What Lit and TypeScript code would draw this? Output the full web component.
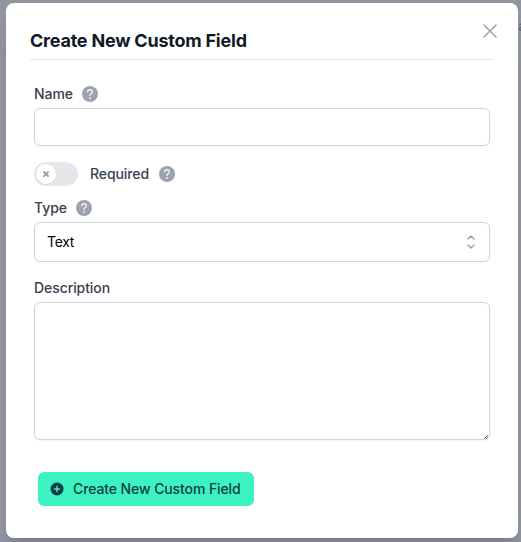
import { LitElement, html, css, svg } from "lit";
import { customElement, property } from "lit/decorators.js";

@customElement("help-icon")
export class HelpIcon extends LitElement {
  static styles = css`
    :host { display: block; width: 16px; height: 16px; }
    svg { display: block; }
  `;
  render() {
    return html`<svg width="16" height="16" viewBox="0 0 16 16" fill="none">
      <circle cx="8" cy="8" r="8" fill="#9ca3af" />
      <path d="M5.600 5.900C5.700 4.500 6.600 3.700 8 3.700c1.400 0 2.400.8 2.400 2 0 .9-.5 1.400-1.200 1.900C8.400 8.100 8 8.500 8 9.400" stroke="#f3f4f6" stroke-width="1.350" stroke-linecap="round" />
      <circle cx="8" cy="11.900" r=".95" fill="#f3f4f6" />
    </svg>`;
  }
}

@customElement("field-label")
export class FieldLabel extends LitElement {
  @property() text = "";
  @property({ type: Boolean }) help = false;
  static styles = css`
    :host { display: flex; align-items: center; gap: 9.6px; height: 20px; }
    .text { font: 500 14px/20px Inter, sans-serif; color: #374151; letter-spacing: -.08px; }
  `;
  render() {
    return html`<span class="text">${this.text}</span>${this.help ? html`<help-icon></help-icon>` : null}`;
  }
}

@customElement("app-root")
export class AppRoot extends LitElement {
  static styles = css`
    * { box-sizing: border-box; }
    :host {
      display: block; position: relative; height: 542px; overflow: hidden;
      padding: 3px 3px 4px 6px; background: #9195a0;
      font-family: Inter, sans-serif; box-sizing: border-box;
    }
    .behind { position: absolute; left: 518.5px; top: 16px; font-size: 14px; line-height: 20px; color: #5d626e; }
    .rule { position: absolute; left: 0; top: 52px; width: 6px; height: 1px; background: #8b8e99; }
    .modal {
      position: relative; height: 535px; padding: 24px; border-radius: 8px; background: #fff;
      box-shadow: 0 20px 25px -5px rgba(0, 0, 0, .1), 0 8px 10px -6px rgba(0, 0, 0, .1);
    }
    .close { position: absolute; right: 16px; top: 16px; width: 24px; height: 24px; padding: 0; border: 0; background: none; }
    svg { display: block; }
    h3 {
      margin: 0; height: 33px; border-bottom: 1px solid #e5e7eb;
      font-size: 18px; line-height: 28px; font-weight: 700; color: #111827; letter-spacing: -.22px;
    }
    form { padding: 24px 4px 0; display: flex; flex-direction: column; gap: 16px; }
    .field { display: flex; flex-direction: column; gap: 4px; }
    .box {
      display: block; width: 100%; border: 1px solid #d1d5db; border-radius: 6px; background: #fff;
      box-shadow: 0 1px 2px rgba(0, 0, 0, .05); outline: none; margin: 0;
      font: 400 14px/20px Inter, sans-serif; letter-spacing: -.3px; color: #000;
    }
    .input { height: 38px; padding: 8px 12px; }
    .select { height: 40px; padding: 0 8px 0 12px; display: flex; align-items: center; justify-content: space-between; }
    .area-wrap { position: relative; }
    .area { height: 138px; resize: none; }
    .grip { position: absolute; right: 1px; bottom: 1px; }
    .row { display: flex; align-items: center; gap: 12px; height: 24px; margin-bottom: -4px; }
    .toggle { width: 44px; height: 24px; padding: 2px; border-radius: 12px; background: #e5e7eb; }
    .knob { width: 20px; height: 20px; border-radius: 50%; background: #fff; display: grid; place-items: center; box-shadow: 0 1px 2px rgba(0, 0, 0, .08); }
    .submit {
      align-self: flex-start; margin: 16px 0 0 4px; width: 216px; height: 34px; padding: 0 12px;
      display: flex; align-items: center; gap: 9px; border: 0; border-radius: 6px;
      background: #3bf2c0; color: #0b3b47; font: 500 14px/20px Inter, sans-serif; letter-spacing: -.1px; white-space: nowrap;
    }
  `;

  private icon(size: number, box: number, body: unknown) {
    return html`<svg width=${size} height=${size} viewBox="0 0 ${box} ${box}" fill="none">${body}</svg>`;
  }

  render() {
    return html`
      <span class="rule"></span>
      <span class="behind">a</span>
      <div class="modal">
        <button class="close" aria-label="Close">
          ${this.icon(24, 24, svg`<path d="M6 18L18 6M6 6l12 12" stroke="#9ca3af" stroke-width="1.5" stroke-linecap="round" />`)}
        </button>
        <h3>Create New Custom Field</h3>
        <form>
          <div class="field">
            <field-label text="Name" help></field-label>
            <input class="box input" />
          </div>
          <div class="row">
            <div class="toggle" role="switch" aria-checked="false">
              <div class="knob">${this.icon(12, 12, svg`<path d="M4 8l2-2m0 0l2-2M6 6L4 4m2 2l2 2" stroke="#9ca3af" stroke-width="2" stroke-linecap="round" stroke-linejoin="round" />`)}</div>
            </div>
            <field-label text="Required" help></field-label>
          </div>
          <div class="field">
            <field-label text="Type" help></field-label>
            <div class="box select">
              <span>Text</span>
              ${this.icon(20, 20, svg`<path d="M7 7l3-3 3 3m0 6l-3 3-3-3" stroke="#9ca3af" stroke-width="1.5" stroke-linecap="round" stroke-linejoin="round" />`)}
            </div>
          </div>
          <div class="field">
            <field-label text="Description"></field-label>
            <div class="area-wrap">
              <textarea class="box area"></textarea>
              <svg class="grip" width="5" height="5" viewBox="0 0 5 5" shape-rendering="crispEdges">
                <path d="M3 1h1v1h-1zM2 2h1v1h-1zM1 3h1v1h-1zM0 4h1v1h-1zM3 3h1v1h-1zM2 4h1v1h-1z" fill="#6b6b6b" />
              </svg>
            </div>
          </div>
          <button class="submit" type="button">
            <svg width="14" height="14" viewBox="0 0 14 14" fill="none">
              <circle cx="7" cy="7" r="6.500" fill="#0b3b47" />
              <path d="M7 4.500v5M4.500 7h5" stroke="#3bf2c0" stroke-width="1.500" stroke-linecap="round" />
            </svg>
            <span>Create New Custom Field</span>
          </button>
        </form>
      </div>
    `;
  }
}
